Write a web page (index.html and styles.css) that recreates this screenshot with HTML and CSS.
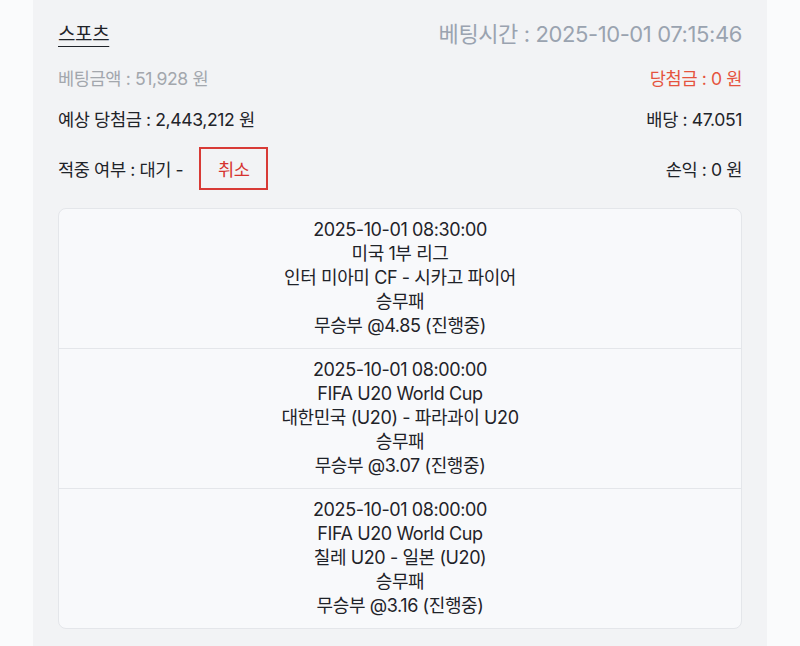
FILE: index.html
```html
<!DOCTYPE html>
<html lang="ko">
<head>
<meta charset="utf-8">
<link rel="stylesheet" href="styles.css">
</head>
<body>
<div class="panel">
  <div class="row head">
    <span class="title">스포츠</span>
    <span class="time">베팅시간 : 2025-10-01 07:15:46</span>
  </div>
  <div class="row r2">
    <span class="muted">베팅금액 : 51,928 원</span>
    <span class="red">당첨금 : 0 원</span>
  </div>
  <div class="row r3">
    <span>예상 당첨금 : 2,443,212 원</span>
    <span>배당 : 47.051</span>
  </div>
  <div class="row r4">
    <span class="status">적중 여부 : 대기 - <span class="cancel">취소</span></span>
    <span>손익 : 0 원</span>
  </div>
  <div class="card">
    <div class="game">
      <div>2025-10-01 08:30:00</div>
      <div>미국 1부 리그</div>
      <div>인터 미아미 CF - 시카고 파이어</div>
      <div>승무패</div>
      <div>무승부 @4.85 (진행중)</div>
    </div>
    <div class="game">
      <div>2025-10-01 08:00:00</div>
      <div>FIFA U20 World Cup</div>
      <div>대한민국 (U20) - 파라과이 U20</div>
      <div>승무패</div>
      <div>무승부 @3.07 (진행중)</div>
    </div>
    <div class="game">
      <div>2025-10-01 08:00:00</div>
      <div>FIFA U20 World Cup</div>
      <div>칠레 U20 - 일본 (U20)</div>
      <div>승무패</div>
      <div>무승부 @3.16 (진행중)</div>
    </div>
  </div>
</div>
</body>
</html>
```
FILE: styles.css
```css
html, body {
  margin: 0;
  padding: 0;
  background: #fafbfc;
  height: 646px;
  overflow: hidden;
}
body {
  font-family: Inter, "Noto Sans CJK KR", sans-serif;
  color: #1f2329;
  letter-spacing: -0.4px;
}
.panel {
  margin: 0 33px;
  background: #f2f3f5;
  padding: 16px 25px 40px;
  min-height: 700px;
  box-sizing: border-box;
}
.row {
  display: flex;
  justify-content: space-between;
  align-items: center;
  font-size: 17.6px;
}
.head {
  height: 32px;
}
.title {
  font-size: 19px;
  text-decoration: underline;
  text-underline-offset: 5px;
  text-decoration-thickness: 1px;
}
.time {
  font-size: 22px;
  color: #9aa3b0;
}
.r2 {
  margin-top: 18px;
  height: 22px;
}
.muted { color: #a3a7ad; }
.red { color: #e5533e; }
.r3 {
  margin-top: 19px;
  height: 22px;
}
.r4 {
  margin-top: 18px;
  height: 43px;
}
.status {
  display: flex;
  align-items: center;
}
.cancel {
  margin-left: 16px;
  width: 69px;
  height: 43px;
  box-sizing: border-box;
  border: 2px solid #d83a36;
  color: #d6322e;
  display: flex;
  align-items: center;
  justify-content: center;
}
.card {
  margin-top: 18px;
  background: #f8f9fb;
  border: 1px solid #e4e6ea;
  border-radius: 8px;
}
.game {
  padding: 9px 0 10px;
  text-align: center;
  font-size: 18px;
  line-height: 24px;
}
.game + .game {
  border-top: 1px solid #e4e6ea;
}
```
